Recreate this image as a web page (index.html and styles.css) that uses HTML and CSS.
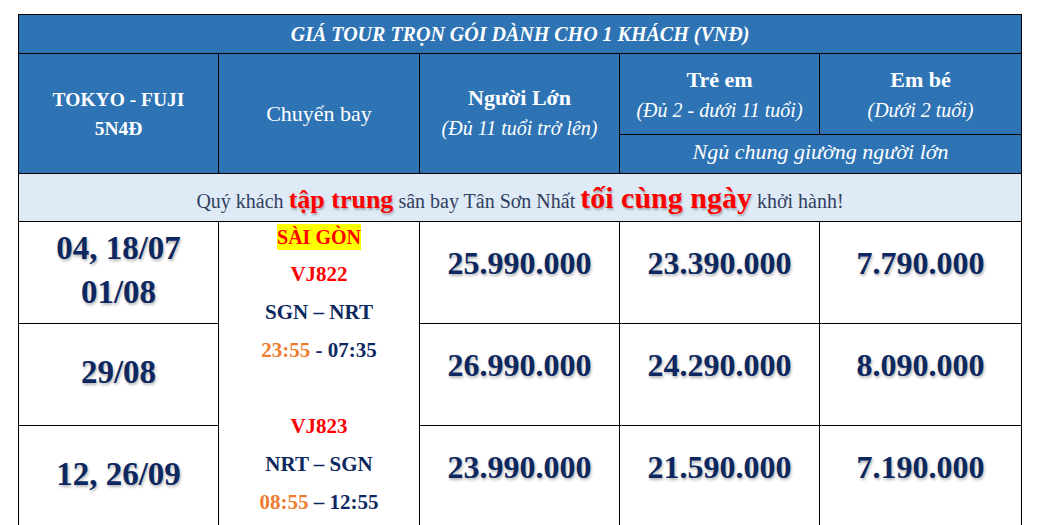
FILE: index.html
```html
<!DOCTYPE html>
<html lang="vi">
<head>
<meta charset="utf-8">
<title>Giá tour Tokyo - Fuji</title>
<link rel="stylesheet" href="styles.css">
</head>
<body>
<table class="tour">
  <colgroup>
    <col class="c1"><col class="c2"><col class="c3"><col class="c4"><col class="c5">
  </colgroup>
  <tr class="title-row">
    <th colspan="5">GIÁ TOUR TRỌN GÓI DÀNH CHO 1 KHÁCH (VNĐ)</th>
  </tr>
  <tr class="head-row">
    <th rowspan="2" class="h-route">TOKYO - FUJI<br>5N4Đ</th>
    <th rowspan="2" class="h-flight">Chuyến bay</th>
    <th rowspan="2" class="h-adult"><b>Người Lớn</b><br><i>(Đủ 11 tuổi trở lên)</i></th>
    <th class="h-kid"><b>Trẻ em</b><br><i>(Đủ 2 - dưới 11 tuổi)</i></th>
    <th class="h-kid"><b>Em bé</b><br><i>(Dưới 2 tuổi)</i></th>
  </tr>
  <tr class="sub-row">
    <th colspan="2" class="h-share">Ngủ chung giường người lớn</th>
  </tr>
  <tr class="notice-row">
    <td colspan="5">Quý khách <b class="hl1">tập trung</b> sân bay Tân Sơn Nhất <b class="hl2">tối cùng ngày</b> khởi hành!</td>
  </tr>
  <tr class="data-row">
    <td class="date">04, 18/07<br>01/08</td>
    <td rowspan="3" class="flight">
      <div class="fl first"><span class="city">SÀI GÒN</span></div>
      <div class="fl red">VJ822</div>
      <div class="fl">SGN – NRT</div>
      <div class="fl"><span class="orange">23:55</span> - 07:35</div>
      <div class="fl">&nbsp;</div>
      <div class="fl red">VJ823</div>
      <div class="fl">NRT – SGN</div>
      <div class="fl"><span class="orange">08:55</span> – 12:55</div>
    </td>
    <td class="price">25.990.000</td>
    <td class="price">23.390.000</td>
    <td class="price">7.790.000</td>
  </tr>
  <tr class="data-row">
    <td class="date">29/08</td>
    <td class="price">26.990.000</td>
    <td class="price">24.290.000</td>
    <td class="price">8.090.000</td>
  </tr>
  <tr class="data-row">
    <td class="date">12, 26/09</td>
    <td class="price">23.990.000</td>
    <td class="price">21.590.000</td>
    <td class="price">7.190.000</td>
  </tr>
</table>
</body>
</html>
```

FILE: styles.css
```css
html, body {
  margin: 0;
  padding: 0;
  background: #ffffff;
}
body {
  font-family: "Liberation Serif", "Times New Roman", serif;
  padding: 14px 0 0 18px;
}
.tour {
  border-collapse: collapse;
  table-layout: fixed;
  width: 1003px;
}
.c1 { width: 200px; }
.c2 { width: 201px; }
.c3 { width: 200px; }
.c4 { width: 200px; }
.c5 { width: 202px; }

.tour th, .tour td {
  border: 1px solid #000000;
  padding: 0;
  text-align: center;
}
.tour th {
  background: #2e74b5;
  color: #ffffff;
  font-weight: normal;
}

.title-row { height: 39px; }
.tour .title-row th {
  font-size: 20px;
  font-weight: bold;
  font-style: italic;
}

.head-row { height: 81px; }
.sub-row { height: 39px; }

.tour .h-route {
  font-size: 19.5px;
  font-weight: bold;
  line-height: 29px;
}
.tour .h-flight {
  font-size: 22px;
}
.tour .h-adult {
  line-height: 29px;
}
.h-adult b, .h-kid b {
  font-size: 22px;
}
.h-adult i, .h-kid i {
  font-size: 20px;
}
.tour .h-kid {
  line-height: 28px;
  padding-top: 3px;
}
.tour .h-share {
  font-size: 22px;
  font-style: italic;
  padding-bottom: 4px;
}

.notice-row { height: 48px; }
.tour .notice-row td {
  background: #deebf7;
  color: #323e5e;
  font-size: 20px;
}
.hl1, .hl2 {
  color: #ff0000;
  text-shadow: 1px 2px 2px rgba(0, 0, 0, 0.28);
}
.hl1 { font-size: 26px; }
.hl2 { font-size: 30px; }

.data-row { height: 102px; }
.tour .data-row td {
  background: #ffffff;
  color: #0d2860;
}
.tour td.date {
  font-size: 33px;
  font-weight: bold;
  line-height: 44px;
  padding-bottom: 6px;
  text-shadow: 1px 2px 3px rgba(0, 0, 0, 0.3);
}
.tour td.price {
  vertical-align: top;
  padding-top: 24px;
  font-size: 32px;
  font-weight: bold;
  line-height: 34px;
  text-shadow: 1px 2px 3px rgba(0, 0, 0, 0.3);
}
.tour td.flight {
  vertical-align: top;
}
.fl {
  font-size: 21px;
  font-weight: bold;
  line-height: 38px;
  color: #0d2860;
}
.fl.first {
  margin-top: -3px;
  line-height: 36px;
}
.city {
  background: #ffff00;
  color: #ff0000;
  font-size: 20px;
  padding: 2px 0;
}
.red {
  color: #ff0000;
}
.orange {
  color: #ed7d31;
}
```
